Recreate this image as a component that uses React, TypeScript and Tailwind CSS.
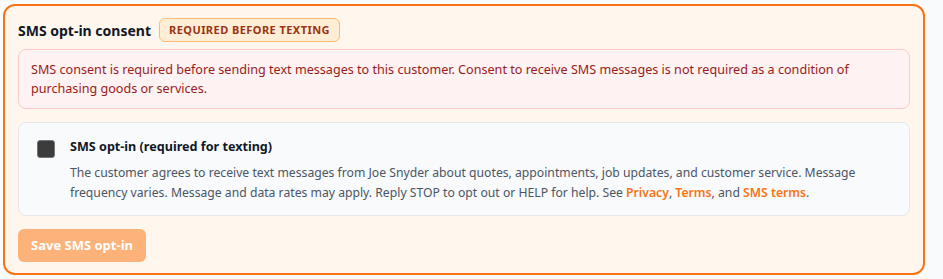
import React from 'react'

export default function App() {
  return (
    <div className="min-h-[279px] bg-[#f9fafb] pt-[4px] pl-[3px]" style={{ fontFamily: '"Noto Sans", sans-serif' }}>
      <div className="w-[922px] rounded-xl border-2 border-[#f97316] bg-[#fff7ed] px-[13px] pt-[12px] pb-[11px]">
        <div className="flex items-center gap-2">
          <h3 className="text-[14px] font-bold text-[#111827]">SMS opt-in consent</h3>
          <span className="flex h-[24px] items-center rounded-md border border-[#fdba74] bg-[#ffedd5] px-[9px] text-[11px] font-bold tracking-[0.04em] text-[#9a3412]">
            REQUIRED BEFORE TEXTING
          </span>
        </div>

        <div className="mt-[7px] rounded-lg border border-[#fecaca] bg-[#fef2f2] px-[12px] py-[10px] text-[12.6px] leading-[19px] text-[#991b1b]">
          SMS consent is required before sending text messages to this customer. Consent to receive SMS messages is not
          required as a condition of purchasing goods or services.
        </div>

        <div className="mt-[13px] flex rounded-lg border border-[#e5e7eb] bg-[#f8fafc] pl-[18px] pr-4 pt-[14px] pb-[12px]">
          <div className="mt-[3px] h-[18px] w-[18px] shrink-0 rounded-[3px] border border-[#757575] bg-[#3c3c3c]" />
          <div className="ml-[15px]">
            <div className="text-[12.6px] leading-5 font-bold text-[#111827]">SMS opt-in (required for texting)</div>
            <p className="mt-[6px] text-[12.2px] leading-5 text-[#4b5563]">
              The customer agrees to receive text messages from Joe Snyder about quotes, appointments, job updates, and
              customer service. Message frequency varies. Message and data rates may apply. Reply STOP to opt out or HELP
              for help. See <a className="font-semibold text-[#f97316]">Privacy</a>,{' '}
              <a className="font-semibold text-[#f97316]">Terms</a>, and{' '}
              <a className="font-semibold text-[#f97316]">SMS terms</a>.
            </p>
          </div>
        </div>

        <button className="mt-[13px] h-[33px] w-[128px] rounded-md bg-[#fdb27a] text-[13px] font-bold text-white">
          Save SMS opt-in
        </button>
      </div>
    </div>
  )
}
